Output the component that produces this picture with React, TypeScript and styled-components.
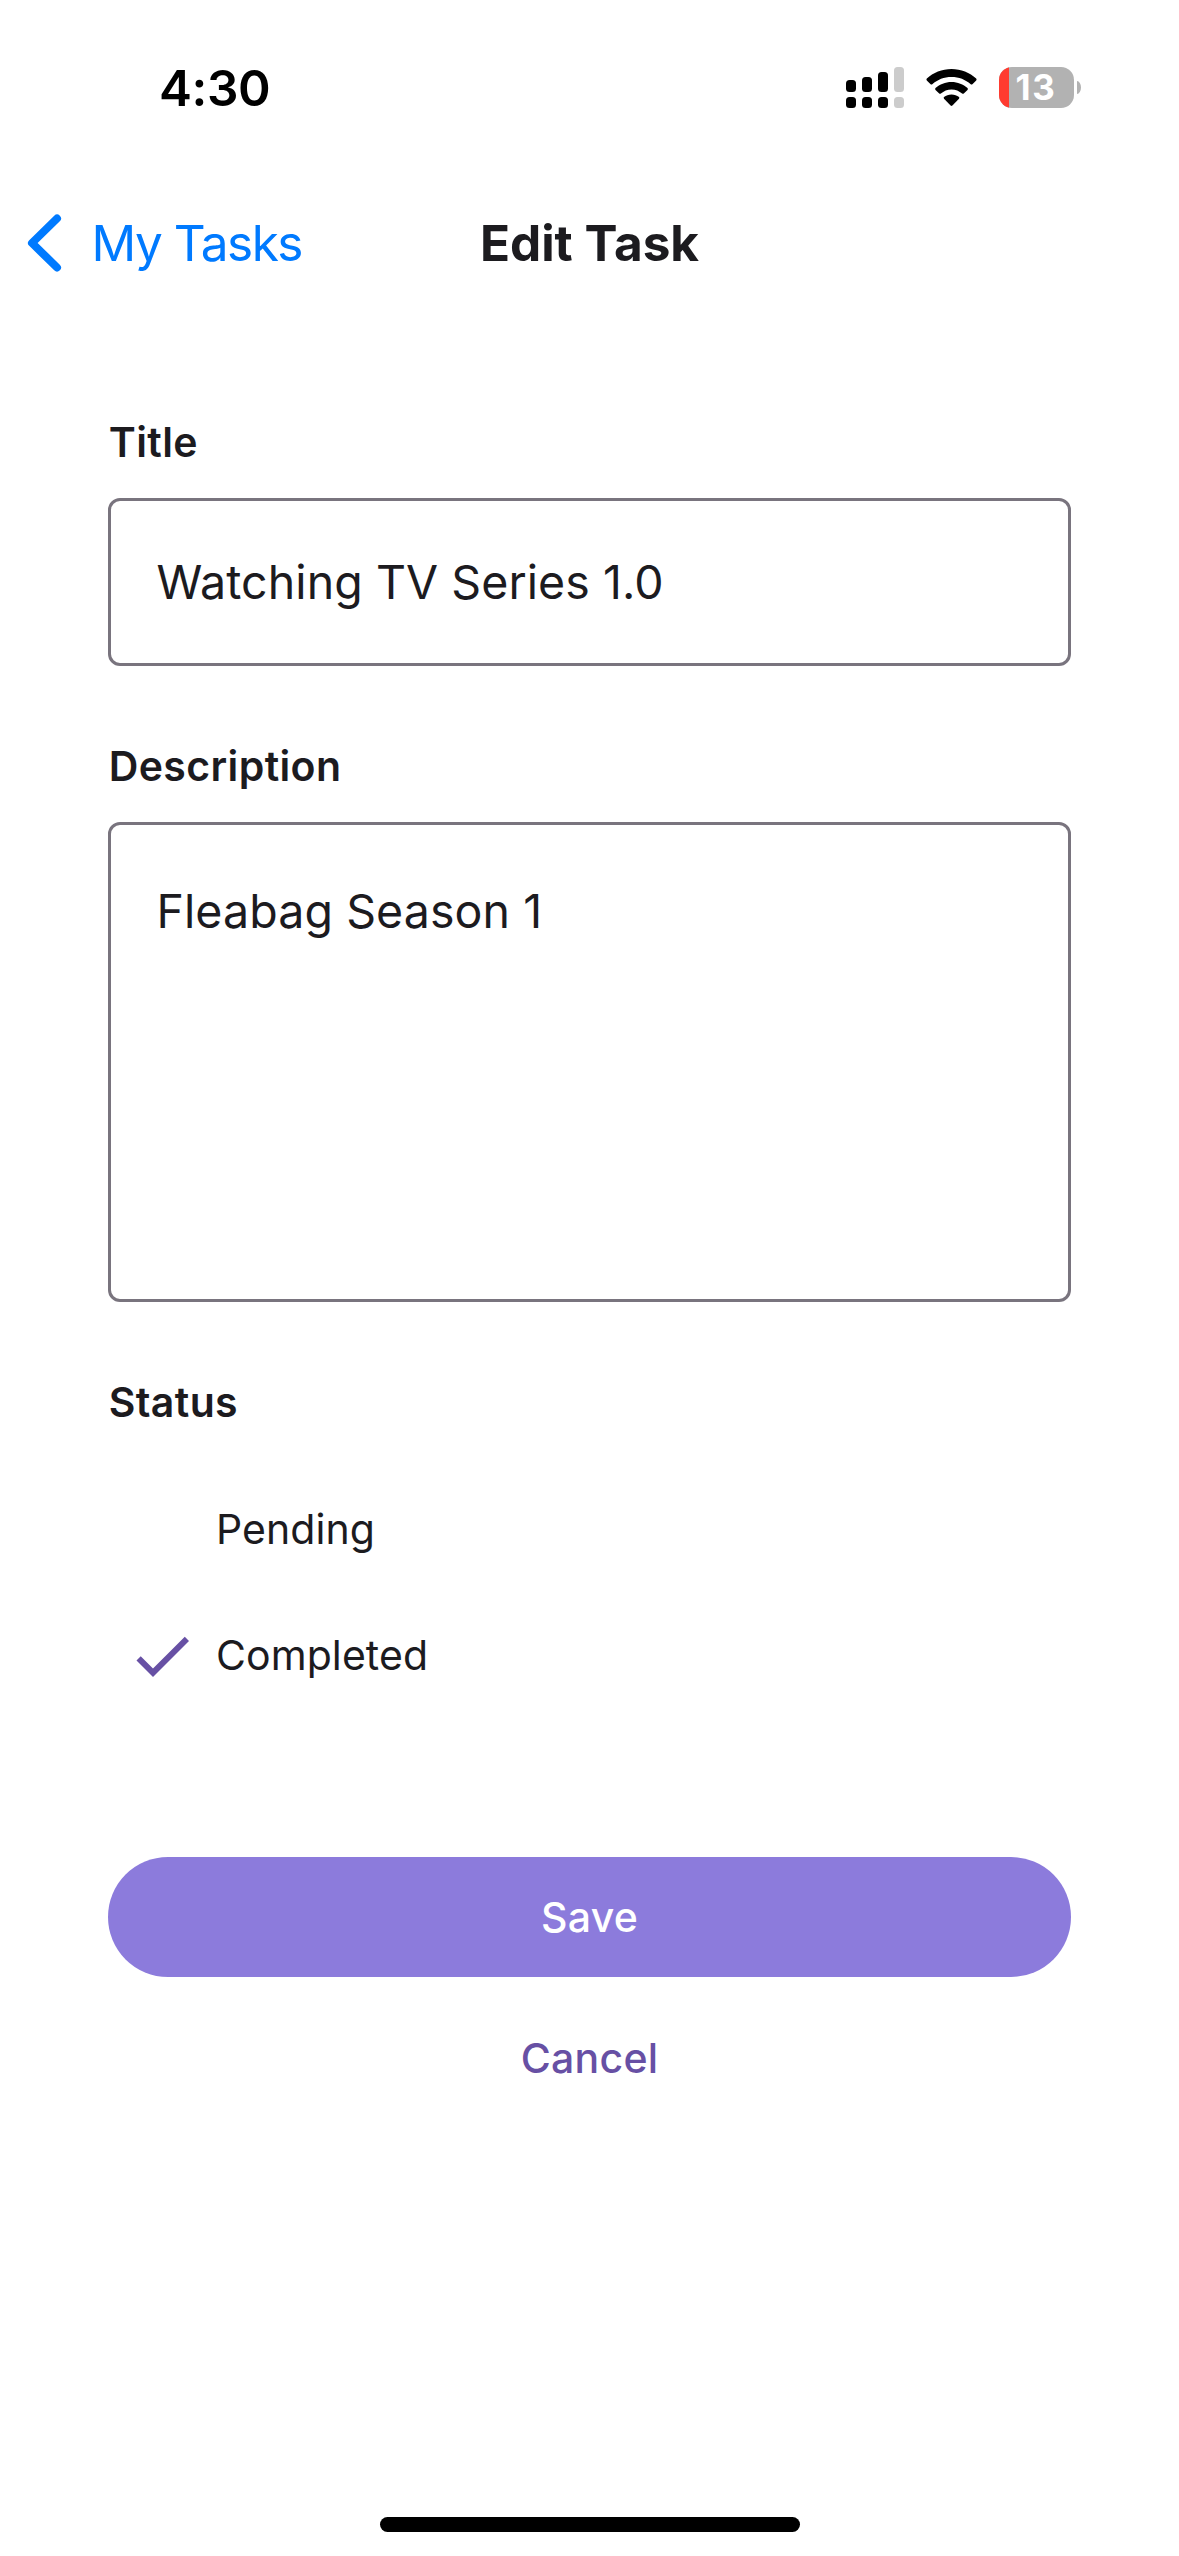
import React, { useState } from "react";
import styled, { createGlobalStyle } from "styled-components";

const GlobalStyle = createGlobalStyle`
  *, *::before, *::after { box-sizing: border-box; }
  body {
    margin: 0;
    background: #ffffff;
    color: #1c1b1f;
    font-family: Inter, "Liberation Sans", sans-serif;
  }
  button {
    border: 0;
    padding: 0;
    background: none;
    font-family: inherit;
  }
`;

const Screen = styled.main`
  display: flex;
  flex-direction: column;
  width: 1179px;
  height: 2556px;
  background: #ffffff;
`;

const StatusBar = styled.header`
  display: flex;
  align-items: center;
  justify-content: space-between;
  height: 177px;
  padding: 0 98px 1px 159px;
`;

const Clock = styled.span`
  font-size: 49.5px;
  font-weight: 600;
  line-height: 60px;
  letter-spacing: -0.4px;
  color: #000000;
`;

const StatusIcons = styled.div`
  display: flex;
  align-items: center;
  padding-bottom: 1px;
`;

const SignalIcon = styled.svg`
  width: 58px;
  height: 41px;
  margin-right: 22px;
`;

const WifiIcon = styled.svg`
  width: 51px;
  height: 41px;
  margin-right: 22px;
`;

const Battery = styled.div`
  display: flex;
  align-items: center;
  gap: 3px;
`;

const BatteryBody = styled.div`
  display: flex;
  width: 75px;
  height: 41px;
  border-radius: 13px;
  overflow: hidden;
  background: #b2b2b2;
`;

const BatteryCharge = styled.div`
  width: 10px;
  background: #ff3b30;
`;

const BatteryLevel = styled.span`
  padding-left: 6.5px;
  font-size: 35px;
  font-weight: 700;
  line-height: 41px;
  letter-spacing: 1.6px;
  color: #ffffff;
`;

const BatteryTip = styled.div`
  width: 4px;
  height: 13px;
  border-radius: 0 4px 4px 0 / 0 6.5px 6.5px 0;
  background: #b2b2b2;
`;

const NavBar = styled.nav`
  display: grid;
  grid-template-columns: 1fr auto 1fr;
  align-items: center;
  height: 132px;
  padding: 0 27px;
`;

const BackButton = styled.button`
  display: flex;
  align-items: center;
  gap: 29.5px;
  font-size: 49.5px;
  line-height: 60px;
  letter-spacing: -1.47px;
  color: #007aff;
`;

const ChevronIcon = styled.svg`
  width: 35px;
  height: 58px;
`;

const NavTitle = styled.h1`
  margin: 0;
  font-size: 49.5px;
  font-weight: 700;
  line-height: 60px;
`;

const Form = styled.form`
  display: flex;
  flex-direction: column;
  padding: 103px 108px 0;
`;

const Field = styled.section`
  display: flex;
  flex-direction: column;
  gap: 26px;
  margin-bottom: 70px;
`;

const Label = styled.h2`
  margin: 0;
  padding-left: 0.75px;
  font-size: 41px;
  font-weight: 600;
  line-height: 60px;
  letter-spacing: 0.38px;
`;

const TextBox = styled.div<{ $multiline?: boolean }>`
  height: ${({ $multiline }) => ($multiline ? "480px" : "168px")};
  padding: ${({ $multiline }) => ($multiline ? "53px" : "48px")} 45.5px 0;
  border: 3px solid #79747e;
  border-radius: 12px;
  font-size: 46.5px;
  line-height: 66px;
  letter-spacing: 0.08px;
`;

const Options = styled.div`
  display: flex;
  flex-direction: column;
  margin-top: 34px;
`;

const Option = styled.button`
  display: flex;
  align-items: center;
  gap: 18px;
  height: 126px;
  padding-left: 18px;
  color: #1c1b1f;
  font-size: 41px;
  line-height: 60px;
  letter-spacing: 0.08px;
`;

const CheckSlot = styled.span`
  display: flex;
  width: 72px;
  height: 72px;
  padding-top: 1px;
`;

const Actions = styled.div`
  display: flex;
  flex-direction: column;
  gap: 21px;
  margin-top: 139px;
`;

const ActionButton = styled.button<{ $primary?: boolean }>`
  height: 120px;
  border-radius: 60px;
  background: ${({ $primary }) => ($primary ? "#8c7bdc" : "transparent")};
  color: ${({ $primary }) => ($primary ? "#ffffff" : "#6750a4")};
  font-size: 41px;
  font-weight: 500;
  line-height: 60px;
  letter-spacing: 0.25px;
`;

const HomeIndicator = styled.div`
  width: 420px;
  height: 15px;
  margin: auto auto 24px 380px;
  border-radius: 8px;
  background: #000000;
`;

const bars = [
  { x: 0, top: 13, fill: "#000000" },
  { x: 16, top: 10, fill: "#000000" },
  { x: 32, top: 5, fill: "#000000" },
  { x: 48, top: 0, fill: "#cccccc" },
];

function Signal() {
  return (
    <SignalIcon viewBox="0 0 58 41">
      {bars.map(({ x, top, fill }) => (
        <g key={x} fill={fill}>
          <rect x={x} y={top} width="10" height={25 - top} rx="3.5" />
          <rect x={x} y="30" width="10" height="11" rx="3.5" />
        </g>
      ))}
    </SignalIcon>
  );
}

function Wifi() {
  return (
    <WifiIcon viewBox="0 0 51 41">
      <path d="M25.5 2C35 2 43.8 5.6 50.2 11.6Q51 12.5 50.2 13.4L46.400 17.200Q45.600 17.900 44.700 17.200C39.500 12.600 33 10 25.500 10S11.500 12.600 6.300 17.200Q5.400 17.900 4.600 17.200L.8 13.400Q0 12.500.8 11.600C7.200 5.600 16 2 25.500 2Z" />
      <path d="M25.500 14.900C31.700 14.900 37.300 17.200 41.500 21.100Q42.300 22 41.500 22.900L37.800 26.500Q37 27.200 36.100 26.500C33.300 24 29.600 22.400 25.500 22.400S17.700 24 14.900 26.500Q14 27.200 13.200 26.500L9.500 22.900Q8.700 22 9.500 21.100C13.700 17.200 19.300 14.900 25.500 14.900Z" />
      <path d="M25.500 27.400C28.400 27.400 31 28.400 33 30.100Q33.700 30.900 33 31.700L26.400 38.500Q25.500 39.300 24.600 38.500L18 31.700Q17.300 30.900 18 30.100C20 28.400 22.600 27.400 25.500 27.400Z" />
    </WifiIcon>
  );
}

const statuses = ["Pending", "Completed"];

export default function App() {
  const [status, setStatus] = useState("Completed");

  return (
    <>
      <GlobalStyle />
      <Screen>
        <StatusBar>
          <Clock>4:30</Clock>
          <StatusIcons>
            <Signal />
            <Wifi />
            <Battery>
              <BatteryBody>
                <BatteryCharge />
                <BatteryLevel>13</BatteryLevel>
              </BatteryBody>
              <BatteryTip />
            </Battery>
          </StatusIcons>
        </StatusBar>

        <NavBar>
          <BackButton type="button">
            <ChevronIcon viewBox="0 0 35 58">
              <path
                d="M30 4.500L5 29L30 53.500"
                fill="none"
                stroke="#007aff"
                strokeWidth="8"
                strokeLinecap="round"
                strokeLinejoin="round"
              />
            </ChevronIcon>
            My Tasks
          </BackButton>
          <NavTitle>Edit Task</NavTitle>
        </NavBar>

        <Form>
          <Field>
            <Label>Title</Label>
            <TextBox>Watching TV Series 1.0</TextBox>
          </Field>
          <Field>
            <Label>Description</Label>
            <TextBox $multiline>Fleabag Season 1</TextBox>
          </Field>
          <Label>Status</Label>
          <Options>
            {statuses.map((name) => (
              <Option key={name} type="button" onClick={() => setStatus(name)}>
                <CheckSlot>
                  {status === name && (
                    <svg width="72" height="72" viewBox="0 0 24 24" fill="#6750a4">
                      <path d="M21 7L9 19L3.500 13.500L4.910 12.090L9 16.170L19.590 5.590L21 7Z" />
                    </svg>
                  )}
                </CheckSlot>
                {name}
              </Option>
            ))}
          </Options>
          <Actions>
            <ActionButton type="button" $primary>
              Save
            </ActionButton>
            <ActionButton type="button">Cancel</ActionButton>
          </Actions>
        </Form>

        <HomeIndicator />
      </Screen>
    </>
  );
}
